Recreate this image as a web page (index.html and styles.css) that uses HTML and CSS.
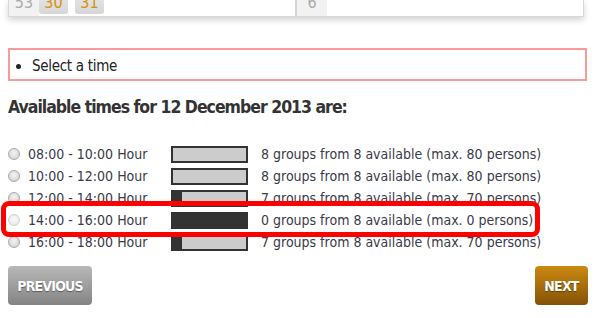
FILE: index.html
```html
<!DOCTYPE html>
<html>
<head>
<meta charset="utf-8">
<link rel="stylesheet" href="styles.css">
</head>
<body>
<div class="page">
  <div class="calendar">
    <div class="cal-half">
      <span class="week">53</span>
      <span class="day">30</span>
      <span class="day">31</span>
    </div>
    <div class="cal-half cal-right">
      <span class="week">6</span>
    </div>
  </div>

  <div class="errors">
    <ul><li>Select a time</li></ul>
  </div>

  <h2 class="title">Available times for 12 December 2013 are:</h2>

  <div class="slots">
    <div class="slot">
      <input type="radio" class="radio" name="t">
      <span class="time">08:00 - 10:00 Hour</span>
      <span class="bar"><span class="fill" style="width:0%"></span></span>
      <span class="info">8 groups from 8 available (max. 80 persons)</span>
    </div>
    <div class="slot">
      <input type="radio" class="radio" name="t">
      <span class="time">10:00 - 12:00 Hour</span>
      <span class="bar"><span class="fill" style="width:0%"></span></span>
      <span class="info">8 groups from 8 available (max. 80 persons)</span>
    </div>
    <div class="slot">
      <input type="radio" class="radio" name="t">
      <span class="time">12:00 - 14:00 Hour</span>
      <span class="bar"><span class="fill" style="width:12.5%"></span></span>
      <span class="info">7 groups from 8 available (max. 70 persons)</span>
    </div>
    <div class="slot">
      <input type="radio" class="radio radio-off" name="t" disabled>
      <span class="time">14:00 - 16:00 Hour</span>
      <span class="bar"><span class="fill" style="width:100%"></span></span>
      <span class="info">0 groups from 8 available (max. 0 persons)</span>
    </div>
    <div class="slot">
      <input type="radio" class="radio" name="t">
      <span class="time">16:00 - 18:00 Hour</span>
      <span class="bar"><span class="fill" style="width:12.5%"></span></span>
      <span class="info">7 groups from 8 available (max. 70 persons)</span>
    </div>
    <div class="highlight"></div>
  </div>

  <div class="nav">
    <button class="btn btn-prev">PREVIOUS</button>
    <button class="btn btn-next">NEXT</button>
  </div>
</div>
</body>
</html>
```

FILE: styles.css
```css
html, body {
  margin: 0;
  padding: 0;
  background: #fff;
}
body {
  font-family: "DejaVu Sans", sans-serif;
  font-stretch: condensed;
  color: #333;
}
.page {
  padding: 0 8px;
}
.calendar {
  display: flex;
  width: 574px;
  height: 16px;
  border: 1px solid #d8d8d8;
  border-top: none;
  box-shadow: 0 3px 6px rgba(0, 0, 0, 0.18);
  overflow: hidden;
  background: #fff;
}
.cal-half {
  display: flex;
  width: 288px;
  border-right: 2px solid #d4d4d4;
  align-items: flex-start;
}
.cal-right {
  border-right: none;
}
.week {
  width: 30px;
  height: 21px;
  background: #f2f2f2;
  color: #aaa;
  font-size: 16px;
  line-height: 1;
  text-align: center;
  margin-top: -5px;
}
.day {
  width: 29px;
  height: 19px;
  margin-top: -5px;
  margin-right: 7px;
  background: linear-gradient(#e6e6e6, #d6d6d6);
  border-radius: 0 0 3px 3px;
  color: #d8900a;
  font-size: 16px;
  line-height: 1;
  text-align: center;
}
.errors {
  margin-top: 31px;
  width: 575px;
  height: 29px;
  border: 2px solid #f99a9a;
  display: flex;
  align-items: center;
}
.errors ul {
  margin: 0;
  padding: 3px 0 0 22px;
}
.errors li {
  font-size: 15px;
  letter-spacing: -0.3px;
  color: #222;
}
.title {
  margin: 14px 0 0;
  font-size: 17.5px;
  letter-spacing: -1px;
  font-weight: bold;
  color: #333;
  line-height: 24px;
}
.slots {
  position: relative;
  margin-top: 24px;
}
.slot {
  display: grid;
  grid-template-columns: 20px 143px 90px auto;
  align-items: center;
  height: 22px;
  font-size: 14px;
  color: #3a3a4a;
}
.radio {
  appearance: none;
  -webkit-appearance: none;
  margin: 0;
  width: 12px;
  height: 12px;
  border-radius: 50%;
  border: 1px solid #a8a8a8;
  background: radial-gradient(circle at 50% 40%, #f4f4f4 0%, #dcdcdc 60%, #c8c8c8 100%);
  box-sizing: border-box;
}
.radio-off {
  border-color: #cfcfcf;
  background: radial-gradient(circle at 50% 40%, #fafafa 0%, #ececec 70%, #e0e0e0 100%);
}
.bar {
  display: flex;
  width: 77px;
  height: 17px;
  box-sizing: border-box;
  border: 2px solid #333;
  background: #ccc;
}
.fill {
  display: block;
  height: 100%;
  background: #333;
}
.highlight {
  position: absolute;
  left: -7px;
  top: 58px;
  width: 539px;
  height: 36px;
  box-sizing: border-box;
  border: 5px solid #f00;
  border-radius: 8px;
}
.nav {
  display: flex;
  justify-content: space-between;
  margin-top: 13px;
  width: 580px;
}
.btn {
  height: 39px;
  border: none;
  border-radius: 4px;
  color: #fff;
  font-family: "DejaVu Sans", sans-serif;
  font-stretch: condensed;
  font-weight: bold;
  font-size: 14px;
  letter-spacing: -0.8px;
  text-shadow: 0 1px 1px rgba(0, 0, 0, 0.4);
  padding: 0;
}
.btn-prev {
  width: 84px;
  background: linear-gradient(#b8b8b8, #848484);
}
.btn-next {
  width: 53px;
  background: linear-gradient(#cc8a10, #845208);
}
```
